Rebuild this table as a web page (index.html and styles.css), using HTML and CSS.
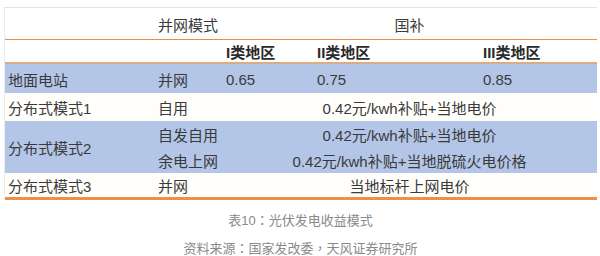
FILE: index.html
```html
<!DOCTYPE html>
<html lang="zh-CN">
<head>
<meta charset="utf-8">
<title>光伏发电收益模式</title>
<link rel="stylesheet" href="styles.css">
</head>
<body>
<div class="page">
  <div class="tbl">
    <div class="c col1 h1"></div>
    <div class="c h1">并网模式</div>
    <div class="c h1 span3 center">国补</div>

    <div class="c col1 h2"></div>
    <div class="c h2"></div>
    <div class="c h2 bold">I类地区</div>
    <div class="c h2 bold">II类地区</div>
    <div class="c h2 bold">III类地区</div>

    <div class="c col1 blue">地面电站</div>
    <div class="c blue">并网</div>
    <div class="c blue">0.65</div>
    <div class="c blue">0.75</div>
    <div class="c blue">0.85</div>

    <div class="c col1 white">分布式模式1</div>
    <div class="c white">自用</div>
    <div class="c white span3 center">0.42元/kwh补贴+当地电价</div>

    <div class="c col1 blue rspan">分布式模式2</div>
    <div class="c blue">自发自用</div>
    <div class="c blue span3 center">0.42元/kwh补贴+当地电价</div>
    <div class="c blue">余电上网</div>
    <div class="c blue span3 center">0.42元/kwh补贴+当地脱硫火电价格</div>

    <div class="c col1 white last">分布式模式3</div>
    <div class="c white last">并网</div>
    <div class="c white last span3 center">当地标杆上网电价</div>
  </div>
  <div class="caption">
    <p>表10<span class="punct" lang="zh-TW">：</span>光伏发电收益模式</p>
    <p>资料来源<span class="punct" lang="zh-TW">：</span>国家发改委<span class="punct" lang="zh-TW">，</span>天风证券研究所</p>
  </div>
</div>
</body>
</html>
```

FILE: styles.css
```css
* { box-sizing: border-box; }
html, body { margin: 0; padding: 0; background: #ffffff; }
body {
  font-family: "Liberation Sans", "Noto Sans CJK SC", sans-serif;
  color: #3a3a3a;
  width: 600px;
  height: 256px;
  overflow: hidden;
}
.page {
  padding: 7px 3px 0 4px;
}
.tbl {
  display: grid;
  grid-template-columns: 149px 68px 91px 166px 118px;
  grid-template-rows: 32px 24px 29px 28px 26px 26px 27px;
  border-top: 1px solid #e4e4e4;
  border-left: 1px solid #ececec;
  width: 593px;
  font-size: 15px;
}
.c {
  display: flex;
  align-items: center;
  padding-left: 4px;
  padding-top: 1px;
  white-space: nowrap;
}
.col1 { padding-left: 3px; }
.h1 { border-bottom: 1px solid #ee8a45; background: #fff; }
.h2 { border-bottom: 2px solid #dcab80; background: #fff; }
.bold { font-weight: bold; color: #2a2a2a; }
.blue { background: #b4c6e7; }
.white { background: #fffefb; }
.last { border-bottom: 3px solid #f08d48; }
.span3 { grid-column: span 3; }
.center { justify-content: center; padding-left: 0; }
.rspan { grid-row: span 2; }
.caption {
  display: flex;
  flex-direction: column;
  align-items: center;
  gap: 7px;
  margin-top: 10px;
  font-size: 13px;
  color: #8a8a8a;
}
.caption p { margin: 0; line-height: 20px; }
.punct { font-family: "Noto Sans CJK TC", sans-serif; }
```
